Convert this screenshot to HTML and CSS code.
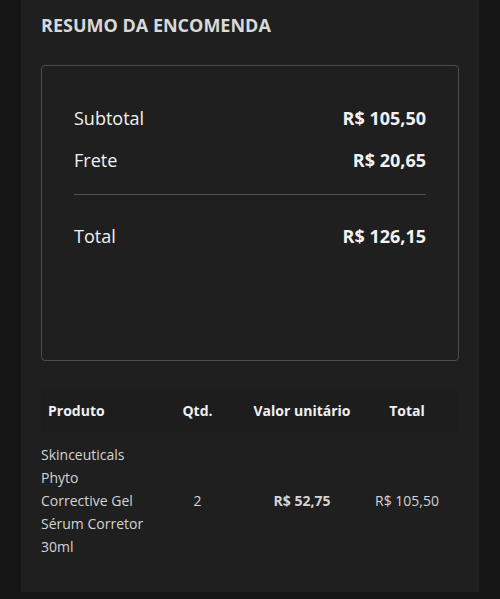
FILE: index.html
```html
<!DOCTYPE html>
<html lang="pt">
<head>
<meta charset="utf-8">
<title>Resumo da encomenda</title>
<link rel="stylesheet" href="styles.css">
</head>
<body>
<div class="page">
  <section class="panel">
    <h2 class="title">RESUMO DA ENCOMENDA</h2>
    <div class="summary">
      <div class="row"><span>Subtotal</span><strong>R$ 105,50</strong></div>
      <div class="row"><span>Frete</span><strong>R$ 20,65</strong></div>
      <hr class="divider">
      <div class="row"><span>Total</span><strong>R$ 126,15</strong></div>
    </div>
    <table class="items">
      <colgroup>
        <col class="c-prod"><col class="c-qtd"><col class="c-val"><col class="c-tot">
      </colgroup>
      <thead>
        <tr><th class="th-prod">Produto</th><th>Qtd.</th><th>Valor unitário</th><th>Total</th></tr>
      </thead>
      <tbody>
        <tr>
          <td class="td-prod">Skinceuticals Phyto Corrective Gel Sérum Corretor 30ml</td>
          <td>2</td>
          <td class="bold">R$ 52,75</td>
          <td>R$ 105,50</td>
        </tr>
      </tbody>
    </table>
  </section>
</div>
</body>
</html>
```
FILE: styles.css
```css
html, body {
  margin: 0;
  padding: 0;
  background: #151515;
  font-family: "Open Sans", "Liberation Sans", sans-serif;
}
.page {
  padding: 0 21px;
  height: 599px;
  box-sizing: border-box;
}
.panel {
  background: #1f1f1f;
  padding: 13px 20px 24px;
}
.title {
  margin: 0;
  font-size: 18px;
  line-height: 24px;
  font-weight: 700;
  color: #d9d9d9;
}
.summary {
  margin-top: 28px;
  height: 296px;
  box-sizing: border-box;
  border: 1px solid #4d4d50;
  border-radius: 4px;
  padding: 31px 32px 0;
  color: #f2f2f2;
}
.row {
  display: flex;
  justify-content: space-between;
  font-size: 18px;
  line-height: 24px;
  padding: 9px 0;
}
.row strong {
  font-weight: 700;
}
.divider {
  border: 0;
  height: 1px;
  background: #505055;
  margin: 13px 0 20px;
}
.items {
  margin-top: 28px;
  width: 100%;
  table-layout: fixed;
  border-collapse: collapse;
  font-size: 14px;
  color: #d4d4d4;
}
.c-prod { width: 105px; }
.c-qtd { width: 103px; }
.c-val { width: 106px; }
.c-tot { width: 104px; }
.items thead tr {
  background: #1d1d1d;
}
.items th {
  font-weight: 700;
  color: #f0f0f0;
  line-height: 20px;
  padding: 12px 0;
  text-align: center;
  white-space: nowrap;
}
.items th.th-prod {
  text-align: left;
  padding-left: 7px;
}
.items td {
  line-height: 23px;
  padding: 10px 0;
  text-align: center;
  vertical-align: middle;
}
.items td.td-prod {
  text-align: left;
}
.items td.bold {
  font-weight: 700;
}
```
